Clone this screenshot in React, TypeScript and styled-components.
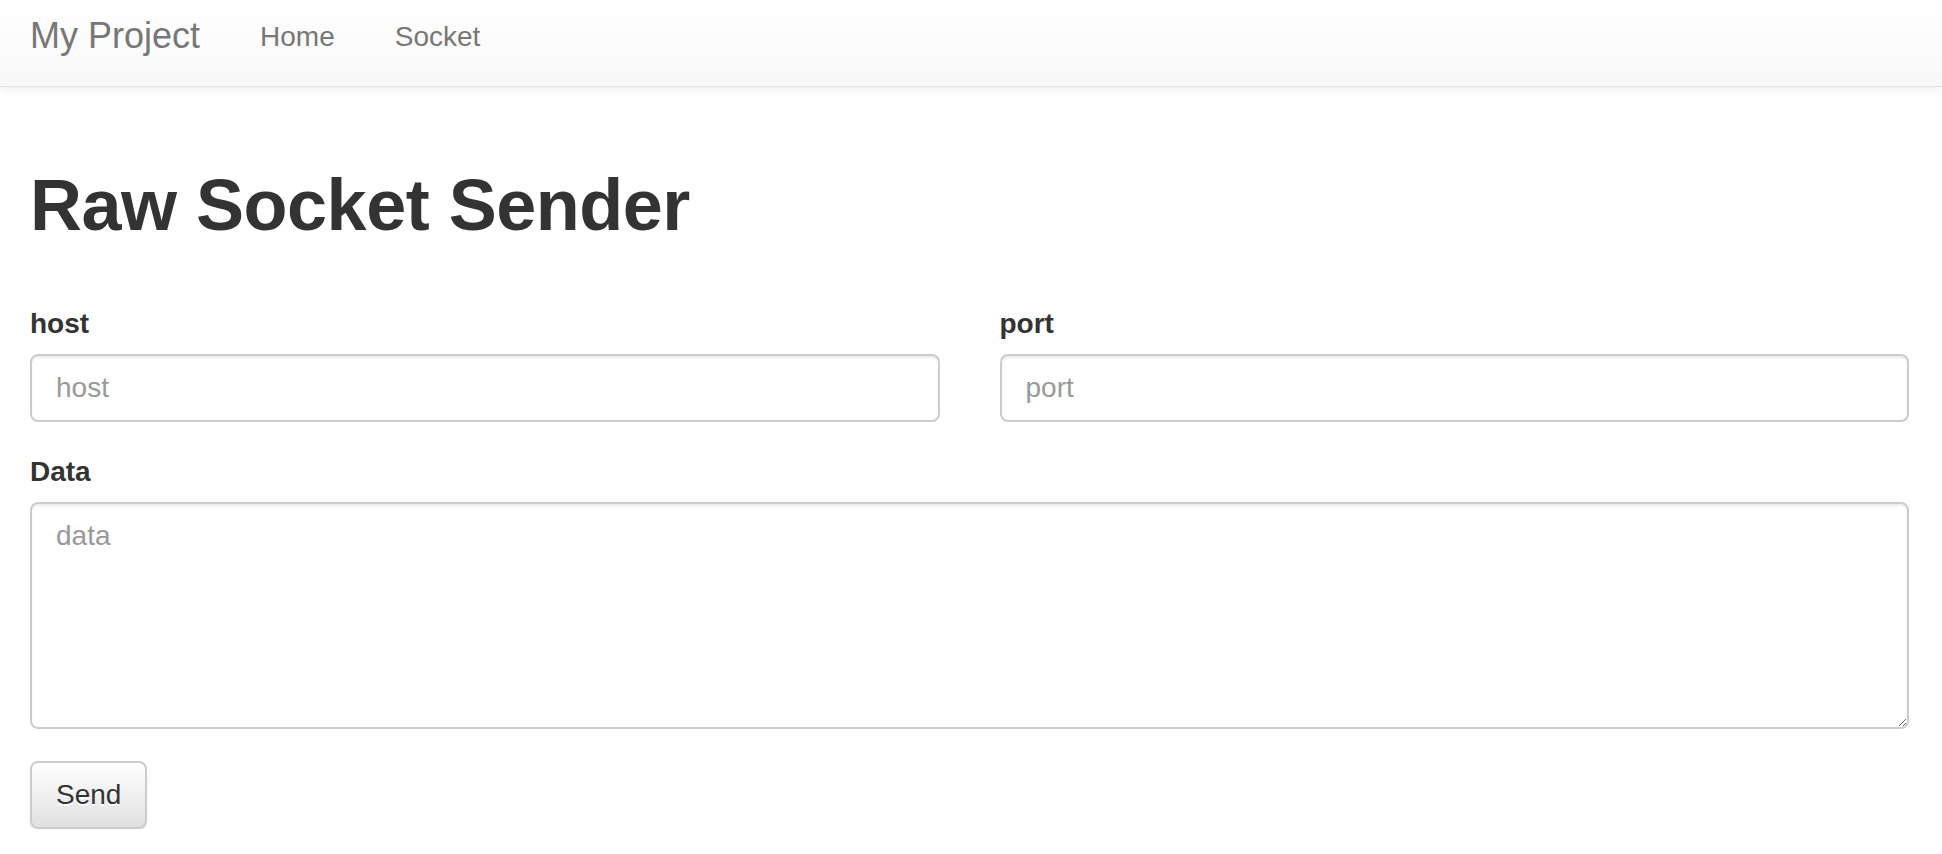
import React from "react";
import styled, { createGlobalStyle } from "styled-components";

const GlobalStyle = createGlobalStyle`
  html, body {
    margin: 0;
    padding: 0;
    background: #fff;
  }
  body {
    font-family: "Liberation Sans", Arial, Helvetica, sans-serif;
    font-size: 28px;
    line-height: 40px;
    color: #333;
  }
  * { box-sizing: border-box; }
`;

const Navbar = styled.nav`
  height: 87px;
  background: linear-gradient(to bottom, #ffffff 0%, #f8f8f8 100%);
  border-bottom: 1px solid #e2e2e2;
  box-shadow: inset 0 2px 0 rgba(255, 255, 255, 0.15), 0 2px 10px rgba(0, 0, 0, 0.075);
`;

const NavInner = styled.div`
  display: flex;
  align-items: flex-start;
  padding: 0 30px;
`;

const Brand = styled.a`
  font-size: 36px;
  line-height: 40px;
  padding: 16px 30px 0 0;
  color: #777;
  text-decoration: none;
`;

const NavLink = styled.a`
  font-size: 28px;
  line-height: 40px;
  padding: 17px 30px 0;
  color: #777;
  text-decoration: none;
`;

const Container = styled.main`
  padding: 40px 33px 0 30px;
`;

const Title = styled.h1`
  font-size: 72px;
  line-height: 79px;
  font-weight: 700;
  letter-spacing: -0.5px;
  color: #333;
  margin: 39px 0 59px;
`;

const Row = styled.div`
  display: grid;
  grid-template-columns: 1fr 1fr;
  column-gap: 60px;
`;

const FormGroup = styled.div`
  margin-bottom: 30px;
`;

const Label = styled.label`
  display: block;
  font-size: 28px;
  line-height: 40px;
  font-weight: 700;
  margin-bottom: 10px;
  color: #333;
`;

const fieldStyles = `
  display: block;
  width: 100%;
  font-family: "Liberation Sans", Arial, Helvetica, sans-serif;
  font-size: 28px;
  line-height: 40px;
  color: #555;
  background: #fff;
  border: 2px solid #ccc;
  border-radius: 8px;
  padding: 12px 24px;
  box-shadow: inset 0 2px 2px rgba(0, 0, 0, 0.075);
  outline: none;
  margin: 0;
  &::placeholder { color: #999; }
`;

const Input = styled.input`
  ${fieldStyles}
  height: 68px;
`;

const TextArea = styled.textarea`
  ${fieldStyles}
  height: 227px;
  resize: vertical;
`;

const Button = styled.button`
  font-family: "Liberation Sans", Arial, Helvetica, sans-serif;
  font-size: 28px;
  line-height: 40px;
  color: #333;
  padding: 12px 24px;
  border: 2px solid #ccc;
  border-radius: 8px;
  background: linear-gradient(to bottom, #ffffff 0%, #e0e0e0 100%);
  text-shadow: 0 2px 0 #fff;
  box-shadow: inset 0 2px 0 rgba(255, 255, 255, 0.15), 0 2px 2px rgba(0, 0, 0, 0.075);
  cursor: pointer;
  margin-top: 2px;
`;

export default function App() {
  return (
    <>
      <GlobalStyle />
      <Navbar>
        <NavInner>
          <Brand href="#">My Project</Brand>
          <NavLink href="#">Home</NavLink>
          <NavLink href="#">Socket</NavLink>
        </NavInner>
      </Navbar>
      <Container>
        <Title>Raw Socket Sender</Title>
        <form onSubmit={(e) => e.preventDefault()}>
          <Row>
            <FormGroup>
              <Label htmlFor="host">host</Label>
              <Input id="host" placeholder="host" />
            </FormGroup>
            <FormGroup>
              <Label htmlFor="port">port</Label>
              <Input id="port" placeholder="port" />
            </FormGroup>
          </Row>
          <FormGroup>
            <Label htmlFor="data">Data</Label>
            <TextArea id="data" placeholder="data" />
          </FormGroup>
          <Button type="submit">Send</Button>
        </form>
      </Container>
    </>
  );
}
